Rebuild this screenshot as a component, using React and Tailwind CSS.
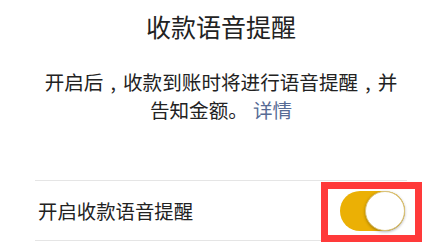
export default function App() {
  const comma = <span className="inline-block w-[1em] text-center">,</span>;
  return (
    <div
      className="w-[442px] h-[247px] bg-white overflow-hidden relative"
      style={{ fontFamily: '"Noto Sans CJK SC", "Noto Sans", sans-serif' }}
    >
      <div className="pt-[10px] text-center text-[25px] leading-[32px] text-[#222]">
        收款语音提醒
      </div>
      <div className="mt-[26px] mx-auto w-[360px] text-center text-[19.6px] leading-[28px] text-[#222]">
        开启后{comma}收款到账时将进行语音提醒{comma}并告知金额。<span className="ml-[5px] text-[#576b95]">详情</span>
      </div>
      <div className="relative mt-[56px] mx-[35px] h-[61px] border-y border-[#e5e5e5] flex items-center justify-between pl-[3px] pr-[2px]">
        <span className="text-[19.4px] text-[#222]">开启收款语音提醒</span>
        <div className="w-[65px] h-[40px] rounded-full bg-[#ebb005] flex justify-end">
          <div className="w-[40px] h-[40px] rounded-full bg-white border border-[#d9c27a] shadow-[0_1px_3px_rgba(0,0,0,0.3)]" />
        </div>
        <div className="absolute left-[286px] top-[1px] w-[101px] h-[60px] border-[7px] border-[#ff3a3a]" />
      </div>
    </div>
  );
}
